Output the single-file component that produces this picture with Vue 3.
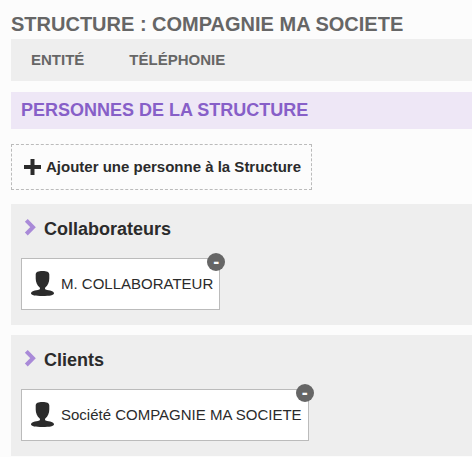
<script setup>
import { ref } from 'vue'

const tabs = ['Entité', 'Téléphonie']

const groups = ref([
  { title: 'Collaborateurs', open: true, people: ['M. COLLABORATEUR'] },
  { title: 'Clients', open: true, people: ['Société COMPAGNIE MA SOCIETE'] },
])

function removePerson(group, index) {
  group.people.splice(index, 1)
}
</script>

<template>
  <main class="page">
    <h1 class="page-title">Structure : Compagnie ma societe</h1>

    <nav class="tabs">
      <a v-for="tab in tabs" :key="tab" class="tab" href="#">{{ tab }}</a>
    </nav>

    <h2 class="section-title">Personnes de la structure</h2>

    <button class="add" type="button">
      <svg class="plus" viewBox="0 0 17 16" aria-hidden="true">
        <path d="M6.500 0h4v6H17v4h-6.500v6h-4v-6H0V6h6.500z" />
      </svg>
      Ajouter une personne à la Structure
    </button>

    <section v-for="group in groups" :key="group.title" class="group">
      <h3 class="group-heading">
        <button class="toggle" type="button" :aria-expanded="group.open" @click="group.open = !group.open">
          <svg class="chevron" viewBox="0 0 12 18" aria-hidden="true">
            <path d="M2.300 0.400L9 7.200 2.300 14" />
          </svg>
          {{ group.title }}
        </button>
      </h3>
      <ul v-if="group.open" class="people">
        <li v-for="(person, index) in group.people" :key="person" class="person">
          <svg class="avatar" viewBox="0 0 23 26" aria-hidden="true">
            <path
              d="M11.500 0C15.800 0 18.300 0.900 18.300 3.600V7.500c0 3.600-1.400 6.700-4 9.100-.5.500-.4 1.700.4 2 1.700.6 4.100.8 5.900 1.500 1.600.6 2.400 1.500 2.400 2.400 0 1.700-4.500 2.500-11.500 2.500S0 24.200 0 22.500c0-.9.800-1.800 2.400-2.400 1.800-.7 4.200-.9 5.900-1.500.8-.3.900-1.500.4-2C6.100 14.200 4.700 11.100 4.700 7.500V3.600C4.700.9 7.200 0 11.500 0z"
            />
          </svg>
          <span>{{ person }}</span>
          <button class="remove" type="button" @click="removePerson(group, index)">-</button>
        </li>
      </ul>
    </section>
  </main>
</template>

<style>
body {
  margin: 0;
  background: #fcfcfc;
}
</style>

<style scoped>
.page {
  padding: 9px 0 0 11px;
  font-family: "Liberation Sans", Arial, sans-serif;
  color: #2b2b2b;
}

h1,
h2,
h3,
ul {
  margin: 0;
  padding: 0;
}

button {
  margin: 0;
  font-family: inherit;
  color: inherit;
  cursor: pointer;
}

.page-title {
  font-size: 20px;
  line-height: 30px;
  text-transform: uppercase;
  color: #666;
}

.tabs {
  display: flex;
  gap: 45px;
  padding: 0 20px;
  background: #eee;
}

.tab {
  font-size: 15px;
  font-weight: bold;
  line-height: 42px;
  text-transform: uppercase;
  text-decoration: none;
  color: #666;
}

.section-title {
  margin: 11px 0 15px;
  padding: 0 10px;
  font-size: 18px;
  line-height: 37px;
  text-transform: uppercase;
  color: #875fc8;
  background: #eee7f6;
}

.add {
  display: flex;
  align-items: center;
  gap: 5px;
  padding: 0 10px 0 12px;
  border: 1px dashed #bbb;
  background: transparent;
  font-size: 15px;
  font-weight: bold;
  line-height: 44px;
}

.plus {
  width: 17px;
  height: 16px;
  fill: currentColor;
}

.group {
  margin-bottom: 10px;
  padding: 10px 10px 15px;
  background: #eee;
}

.add + .group {
  margin-top: 14px;
}

.toggle {
  display: flex;
  align-items: center;
  gap: 8px;
  padding: 0 3px;
  border: 0;
  background: none;
  font-size: 18px;
  font-weight: bold;
  line-height: 30px;
}

.chevron {
  width: 12px;
  height: 18px;
  overflow: visible;
  fill: none;
  stroke: #a98ad8;
  stroke-width: 4;
}

.people {
  display: flex;
  flex-wrap: wrap;
  gap: 14px;
  padding-top: 14px;
  list-style: none;
}

.person {
  position: relative;
  display: flex;
  align-items: center;
  gap: 7px;
  padding: 0 6px 0 9px;
  border: 1px solid #bbb;
  background: #fff;
  font-size: 15px;
  line-height: 50px;
}

.avatar {
  width: 23px;
  height: 26px;
  fill: currentColor;
}

.remove {
  position: absolute;
  top: -6px;
  right: -6px;
  width: 18px;
  height: 18px;
  padding: 0;
  border: 0;
  border-radius: 50%;
  background: #666;
  color: #fff;
  font-size: 18px;
  font-weight: bold;
  line-height: 16px;
}
</style>
